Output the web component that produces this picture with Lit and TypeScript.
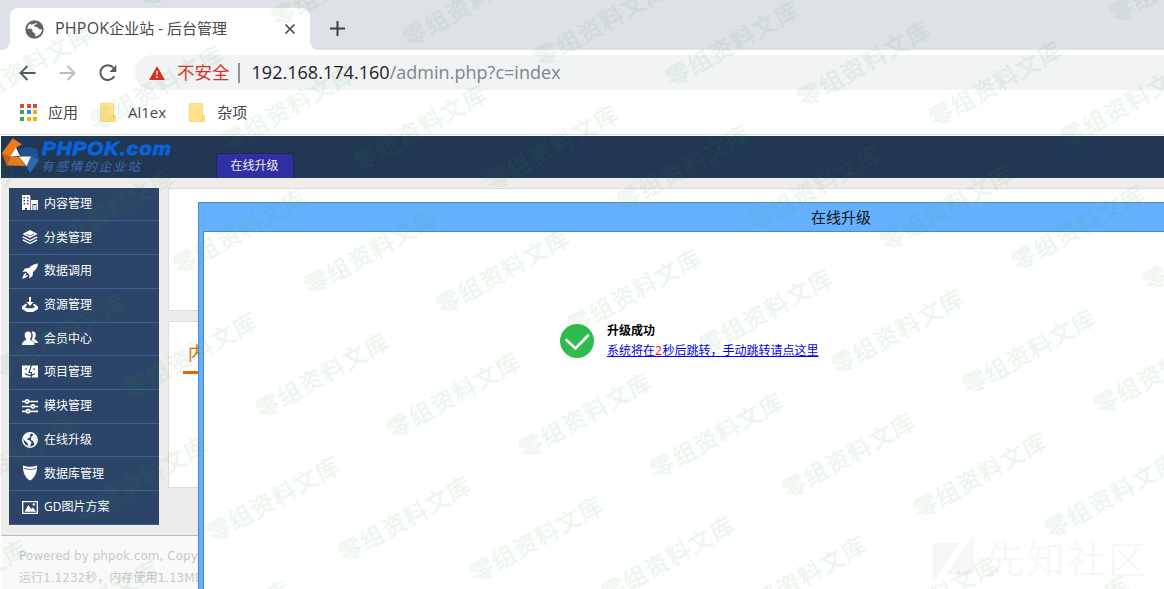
import { LitElement, html, css, svg } from "lit";
import { customElement } from "lit/decorators.js";

const globe = svg`<circle cx="12" cy="12" r="11.6" fill="#5f6368"/><path fill="#fff" d="M2.500 11c1-3.500 3-6.500 6.500-8 2.500-.8 5.500-.4 5.600 1.300.1 1.600-2.800 1.300-3.200 2.900-.4 1.500 2.200 1 3.500 1.600 2.300 1.100 2.700 3.100 4.300 3.200 1.100.1 1.900-.7 2.300-.6.2 2.400-1.200 5.700-3.900 7.600-1.700 1.200-3.300 1.600-5 1.600-.4-1.300.9-1.800.4-3-.7-1.500-2.500-1.200-3.300-2.700-.5-1-.1-1.800-.8-2.800-1.300-1.600-3.300-.5-6.400-1.100z"/><path fill="#5f6368" d="M6 3.500l5.500-1.700 3 1.200-3 2.200-3.500.8z"/>`;

const menu = [
  {
    label: "内容管理",
    icon: svg`<path fill="#fff" fill-rule="evenodd" d="M0 0h8v15H5v-2H3v2H0zM1.500 2v1.500H3V2zM5 2v1.500h1.500V2zM1.500 5v1.500H3V5zM5 5v1.500h1.500V5zM1.500 8v1.500H3V8zM5 8v1.500h1.500V8zM9 5h7v10h-1.500V9h-4v6H9z"/><path stroke="#b45fc4" d="M8.500 1v14" fill="none"/><path fill="#c7d7ee" d="M11 10h3v5h-3z"/>`,
  },
  {
    label: "分类管理",
    icon: svg`<path fill="#fff" d="M8 1l7.500 4L8 9 .5 5z"/><path fill="none" stroke="#fff" stroke-width="1.400" d="M.8 7.800L8 11.500l7.200-3.700M.8 10.800L8 14.500l7.200-3.700"/><path fill="none" stroke="#2b4468" stroke-width=".8" d="M4 5l4 2 4-2"/>`,
  },
  {
    label: "数据调用",
    icon: svg`<path fill="#fff" d="M16 .5c-4 .2-7 2-9 4.500L3 5.500.5 9 4 8.500 7.500 12 7 15.500l3.500-2.500.5-4c3-2 4.800-5 5-8.500zM3.500 10C2 10.500.8 13 .3 15.700 3 15.200 5.500 14 6 12.500L5 12l-2 1.500L4.300 11z"/>`,
  },
  {
    label: "资源管理",
    icon: svg`<path fill="#fff" d="M7 0h2v5h2.500L8 9 4.500 5H7z"/><path fill="#fff" fill-rule="evenodd" d="M4 6.500L0 9.500V12l5 3h6l5-3V9.500l-4-3-1 1.500 2 2-2.500 1.300h-5L3 10l2-2z"/>`,
  },
  {
    label: "会员中心",
    icon: svg`<path fill="#fff" d="M9.500 2c2-1.300 4.500 0 4.300 3 0 1.600-.8 2.700-1.300 3.500.2 1.500 3.500 2 3.500 4.500h-3.500c-.7-1.800-2.500-2.300-3-3C11 7.500 11.300 4 9.500 2z"/><path fill="#fff" d="M6 1.500c2.200 0 3.500 1.500 3.300 4C9.200 7.300 8.500 8.500 8 9c.2 2 4.500 1.500 4.500 6H0c0-4.500 4-4 4.200-6-.6-.5-1.300-1.700-1.500-3.500C2.500 3 3.800 1.500 6 1.500z"/>`,
  },
  {
    label: "项目管理",
    icon: svg`<path fill="#fff" d="M0 1.500h16v12H0z"/><path fill="none" stroke="#2b4468" stroke-width="1.100" d="M9.500 1L7 8.500h2.500L9 15.500M4 4v2M12 4v2M3 9.500c3 2.300 7 2.300 10 0"/>`,
  },
  {
    label: "模块管理",
    icon: svg`<g fill="none" stroke="#fff" stroke-width="1.700"><path d="M0 3.500h3m4 0h9M0 8.500h9m4 0h3M0 13.300h4m4 0h8"/><circle cx="5" cy="3.500" r="1.600"/><circle cx="11" cy="8.500" r="1.600"/><circle cx="6" cy="13.300" r="1.600"/></g>`,
  },
  {
    label: "在线升级",
    icon: svg`<circle cx="8" cy="8" r="7.200" fill="none" stroke="#fff" stroke-width="1.500"/><path fill="#fff" d="M1.500 4c2-2.500 5-3 7.500-2.500L7.500 3.500l1.500 1L6.500 6 5 7.500l3 1 1.500 2L8 14.500 6 14l-.5-3L2 8zM10 4l2-1.500 3 4-.5 4-2 2-1.500-3.500-2-1V6z"/>`,
  },
  {
    label: "数据库管理",
    icon: svg`<path fill="#fff" d="M1 .5c4.500 1.700 9.500 1.700 14 0C15.500 7 12.500 13.500 8 15.500 3.500 13.500.5 7 1 .5z"/><path fill="none" stroke="#2b4468" stroke-width=".8" d="M1.500 3.200C6 4.800 10 4.800 14.500 3.200"/>`,
  },
  {
    label: "GD图片方案",
    icon: svg`<path fill="none" stroke="#fff" stroke-width="1.300" d="M.7 2.700h14.600v11.600H.7z"/><path fill="#fff" d="M2.500 12.800L6.300 6l3 4 1.700-1.700 3 4.500z"/><circle cx="11.800" cy="5.500" r="1.200" fill="#fff"/>`,
  },
];

/* Centres of the repeated diagonal stamp, stepped along two skewed axes. */
const stamps: Array<[number, number]> = [];
for (let row = -6; row <= 3; row++) {
  for (let col = -6; col <= 10; col++) {
    const x = 322.500 + col * 131.600 - row * 49;
    const y = 375.300 + col * 20 + row * 123.800;
    if (x > -60 && x < 1224 && y > -40 && y < 630) stamps.push([x, y]);
  }
}

@customElement("browser-chrome")
class BrowserChrome extends LitElement {
  static styles = css`
    :host { display: block; color: #45484d; }
    .tabs { height: 50px; background: #dee1e6; display: flex; padding: 8px 0 0 2px; box-sizing: border-box; }
    .curve { align-self: flex-end; width: 8px; height: 8px; }
    .curve.l { background: radial-gradient(circle at 0 0, #dee1e6 7.500px, #fff 8px); }
    .curve.r { background: radial-gradient(circle at 100% 0, #dee1e6 7.500px, #fff 8px); }
    .tab { width: 300px; height: 42px; background: #fff; border-radius: 8px 8px 0 0; display: flex; align-items: center; padding: 0 14px 0 15px; box-sizing: border-box; }
    .title { font-size: 15px; margin-left: 11px; flex: 1; white-space: nowrap; }
    .title .latin { font-size: 16px; letter-spacing: .2px; }
    .new { margin: 13px 0 0 12px; }
    .bar { height: 45px; display: flex; align-items: center; padding-left: 19px; background: #fff; }
    .bar .fwd { margin-left: 23px; }
    .bar .reload { margin-left: 23px; }
    .omni { flex: 1; height: 35px; margin-left: 18px; border-radius: 17.500px 0 0 17.500px; background: #f1f3f4; display: flex; align-items: center; padding-left: 14px; white-space: nowrap; }
    .warn { color: #d93025; font-size: 17.500px; margin-left: 12px; }
    .sep { width: 2px; height: 20px; background: #8f9397; margin: 0 12px 0 8px; }
    .url { font-size: 18px; color: #202124; letter-spacing: .03px; }
    .path { color: #80868b; }
    .marks { height: 40px; display: flex; align-items: center; padding: 0 0 5px 20px; box-sizing: border-box; border-bottom: 1px solid #d9dcdd; font-size: 15px; background: #fff; }
    .marks span { white-space: nowrap; }
    .apps { width: 17px; height: 17px; display: grid; grid-template: repeat(3, 4px) / repeat(3, 4px); gap: 2.500px; margin: 0 11px 0 0; }
    .folder { margin: 0 12px 0 22px; }
    .folder.second { margin-left: 23px; }
    .r { background: #ea4335; } .g { background: #34a853; } .b { background: #2a87f0; } .y { background: #fbab00; }
  `;
  render() {
    const folder = (cls: string) => html`<svg class=${cls} width="16" height="19" viewBox="0 0 16 19"><path fill="#ffe48b" stroke="#f3cf60" stroke-width=".7" d="M.4.4h13.200v11.800l2 .8v5.600H.4z"/><path fill="none" stroke="#edc657" d="M13.500 12v3.500l-1.500 2.500"/></svg>`;
    return html`
      <div class="tabs">
        <i class="curve l"></i>
        <div class="tab">
          <svg width="19" height="19" viewBox="0 0 24 24">${globe}</svg>
          <span class="title"><span class="latin">PHPOK</span>企业站 - 后台管理</span>
          <svg width="12" height="12" viewBox="0 0 12 12"><path d="M1.500 1.500l9 9m0-9l-9 9" stroke="#45484d" stroke-width="1.700"/></svg>
        </div>
        <i class="curve r"></i>
        <svg class="new" width="15" height="15" viewBox="0 0 15 15"><path d="M7.500 0v15M0 7.500h15" stroke="#3c4043" stroke-width="2"/></svg>
      </div>
      <div class="bar">
        <svg width="17" height="16" viewBox="0 0 17 16"><path d="M16.500 8H2M8.500 1L1.500 8l7 7" fill="none" stroke="#55595e" stroke-width="1.900"/></svg>
        <svg class="fwd" width="17" height="16" viewBox="0 0 17 16"><path d="M.5 8H15M8.500 1l7 7-7 7" fill="none" stroke="#bbbdc0" stroke-width="1.900"/></svg>
        <svg class="reload" width="18" height="18" viewBox="0 0 18 18"><path d="M15.300 12.200A7.400 7.400 0 1 1 14.600 4" fill="none" stroke="#55595e" stroke-width="2"/><path d="M17.300 1v7h-7z" fill="#55595e"/></svg>
        <div class="omni">
          <svg width="16" height="14" viewBox="0 0 16 14"><path d="M8 0l8 14H0z" fill="#d93025"/><path d="M8 5v4m0 1.300v1.700" stroke="#f1f3f4" stroke-width="1.500"/></svg>
          <span class="warn">不安全</span><i class="sep"></i>
          <span class="url">192.168.174.160<span class="path">/admin.php?c=index</span></span>
        </div>
      </div>
      <div class="marks">
        <div class="apps"><i class="r"></i><i class="r"></i><i class="r"></i><i class="g"></i><i class="b"></i><i class="y"></i><i class="g"></i><i class="y"></i><i class="y"></i></div>
        <span>应用</span>${folder("folder")}<span>Al1ex</span>${folder("folder second")}<span>杂项</span>
      </div>`;
  }
}

@customElement("side-menu")
class SideMenu extends LitElement {
  static styles = css`
    :host { display: block; width: 150px; background: #2b4468; }
    .item { height: 33.740px; box-sizing: border-box; border-bottom: 1px solid #3b6296; display: flex; align-items: center; padding: 0 0 0 13px; color: #fff; font-size: 12px; white-space: nowrap; }
    svg { margin: 0 6px 1px 0; }
  `;
  render() {
    return menu.map((m) => html`<div class="item"><svg width="16" height="16" viewBox="0 0 16 16">${m.icon}</svg>${m.label}</div>`);
  }
}

@customElement("app-root")
class AppRoot extends LitElement {
  static styles = css`
    :host { display: block; position: relative; width: 1164px; height: 589px; overflow: hidden; background: #fff; font-family: "Open Sans", "Noto Sans CJK SC", sans-serif; line-height: 1.200; }
    .page { margin: 1px 0 0 1px; height: 453px; background: #eeedec; display: flex; flex-direction: column; }
    .head { height: 42px; flex: none; background: #213754; display: flex; align-items: flex-end; }
    .logo { width: 216px; height: 42px; flex: none; }
    .tag { width: 76px; height: 24px; background: #302fa3; border: 1px solid #1b2a55; border-bottom: 0; border-radius: 3px 3px 0 0; color: #eee; font-size: 12px; line-height: 23px; text-align: center; text-indent: -1px; margin-left: -1px; }
    .main { display: flex; align-items: flex-start; height: 357px; flex: none; box-sizing: border-box; padding: 9.600px 0 0 8px; margin-right: -3px; }
    .cards { margin-left: 9px; flex: 1; display: flex; flex-direction: column; gap: 10px; }
    .card { background: #fff; border: 1px solid #dbdbdb; box-sizing: border-box; }
    .card.a { height: 123px; }
    .card.b { height: 167px; padding: 19px 0 0 14px; }
    .heading { display: inline-block; border-bottom: 3px solid #e26a00; color: #e26a00; font-size: 18px; height: 30px; line-height: 25px; padding: 0 5px; }
    .foot { flex: 1; border-top: 1px solid #bdbdbd; background: #f9f9f9; padding: 9px 0 0 18px; color: #c9c9c9; font: 12px/22px "DejaVu Sans", "Noto Sans CJK SC", sans-serif; letter-spacing: .03px; white-space: nowrap; }
    .foot div { height: 22px; }
    .dialog { position: absolute; left: 198px; top: 202px; width: 1286px; height: 500px; box-sizing: border-box; border: 1px solid #4c8ac8; background: #65b1fd; padding: 0 4px; }
    .bar { height: 28px; line-height: 28px; text-align: center; font-size: 15px; color: #111; }
    .body { background: #fff; border: 1px solid #4c8ac8; height: 460px; padding: 89px 0 0 356px; display: flex; gap: 13px; box-sizing: border-box; }
    .ok { margin-top: 3px; }
    .msg { font-size: 12px; line-height: 20px; white-space: nowrap; color: #000; }
    .link { color: #0000ee; text-decoration: underline; }
    .count { color: #f00; letter-spacing: .6px; }
    .brand { position: absolute; left: 932px; top: 534px; width: 216px; height: 55px; }
    .marks { position: absolute; inset: 0; pointer-events: none; opacity: .085; }
  `;
  render() {
    return html`
      <browser-chrome></browser-chrome>
      <div class="page">
        <div class="head">
          <svg class="logo" viewBox="1 136 216 42">
            <path fill="#1d4f92" d="M18 149l11-2 8 2 2 11-9 13-4-7z"/><path fill="#2b66ad" d="M31 156l8 4-9 13-4-7z"/>
            <path fill="#ea7a1c" d="M12.700 138.300l9.300 6-6 3.500-5.500 8.700 9 .5L26 166l-19-.5L2 153z"/>
            <path fill="#c95d12" d="M2 153l9 4-4 8.500z"/>
            <path fill="#fff" d="M16 147.500l-5.800 9L20 156zM19 156.500h12L26.500 166z"/>
            <text x="42" y="155.300" textLength="130" lengthAdjust="spacingAndGlyphs" font-family="Liberation Sans" font-weight="700" font-style="italic" font-size="19" letter-spacing="1" fill="#0764dc" stroke="#0764dc" stroke-width="1">PHPOK.com</text>
            <text x="41" y="171" textLength="99" font-family="Noto Sans CJK SC" font-style="italic" font-size="12.500" fill="#3f6ca8">有感情的企业站</text>
          </svg>
          <div class="tag">在线升级</div>
        </div>
        <div class="main">
          <side-menu></side-menu>
          <div class="cards">
            <div class="card a"></div>
            <div class="card b"><span class="heading">内容管理</span></div>
          </div>
        </div>
        <div class="foot"><div>Powered by phpok.com, Copyright</div><div>运行1.1232秒，内存使用1.13MB</div></div>
      </div>
      <div class="dialog">
        <div class="bar">在线升级</div>
        <div class="body">
          <svg class="ok" width="34" height="34" viewBox="0 0 34 34"><circle cx="17" cy="17" r="17" fill="#30bb4e"/><path d="M6.500 16l9 8.500L28 11.500" fill="none" stroke="#fff" stroke-width="2.600" stroke-linecap="round"/></svg>
          <div class="msg"><b>升级成功</b><br /><span class="link">系统将在<span class="count">2</span>秒后跳转，手动跳转请点这里</span></div>
        </div>
      </div>
      <svg class="brand" viewBox="932 534 216 55">
        <path fill="#f6f6f6" d="M933 543h26l-26 40zM974 535v40h-28z"/>
        <text x="986" y="573" textLength="160" font-family="Noto Sans CJK SC" font-size="38" font-weight="300" fill="#f7f7f7" stroke="#f7f7f7" stroke-width=".6">先知社区</text>
      </svg>
      <svg class="marks" width="1164" height="589" fill="#3ca046" stroke="#3ca046" stroke-width=".3" font-family="Noto Sans CJK SC" font-size="23.500" font-weight="500" text-anchor="middle" letter-spacing="1.300">
        ${stamps.map(([x, y]) => svg`<text transform="translate(${x} ${y}) rotate(-29.3)" y="8.500">零组资料文库</text>`)}
      </svg>`;
  }
}
